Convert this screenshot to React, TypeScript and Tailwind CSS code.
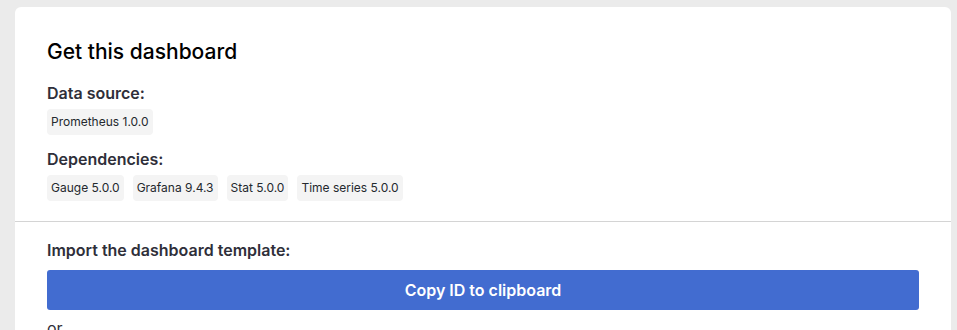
const dataSources = ["Prometheus 1.0.0"];
const dependencies = ["Gauge 5.0.0", "Grafana 9.4.3", "Stat 5.0.0", "Time series 5.0.0"];

function Chip({ label }: { label: string }) {
  return (
    <span className="inline-flex items-center h-[26px] px-[4px] rounded-[4px] bg-[#f4f4f4] text-[12px] text-[#24292e]">
      {label}
    </span>
  );
}

export default function App() {
  return (
    <div
      className="h-[330px] overflow-hidden bg-[#ebebeb] pt-[7px] pl-[15px] pr-[6px]"
      style={{ fontFamily: "Inter, 'Noto Sans', sans-serif" }}
    >
      <div className="bg-white rounded-t-[6px] h-[400px]">
        {/* Top section */}
        <div className="px-8 pt-[31px] pb-[20px]">
          <h2 className="text-[21px] leading-[28px] font-medium text-black">Get this dashboard</h2>

          <h3 className="mt-[15px] text-[16px] leading-[24px] font-semibold text-[#2f2f3a]">Data source:</h3>
          <div className="mt-[4px] flex gap-[8px]">
            {dataSources.map((d) => (
              <Chip key={d} label={d} />
            ))}
          </div>

          <h3 className="mt-[12px] text-[16px] leading-[24px] font-semibold text-[#2f2f3a]">Dependencies:</h3>
          <div className="mt-[4px] flex gap-[9px]">
            {dependencies.map((d) => (
              <Chip key={d} label={d} />
            ))}
          </div>
        </div>

        <div className="border-t border-[#d4d4d4]" />

        {/* Import section */}
        <div className="px-8 pt-[16px]">
          <h3 className="text-[16px] leading-[24px] font-semibold text-[#2f2f3a]">Import the dashboard template:</h3>
          <button
            type="button"
            className="mt-[8px] w-full h-[40px] rounded-[3px] bg-[#426cd0] text-white text-[16px] font-semibold"
          >
            Copy ID to clipboard
          </button>
          <p className="mt-[6px] text-[16px] leading-[24px] text-[#2f2f3a]">or</p>
        </div>
      </div>
    </div>
  );
}
